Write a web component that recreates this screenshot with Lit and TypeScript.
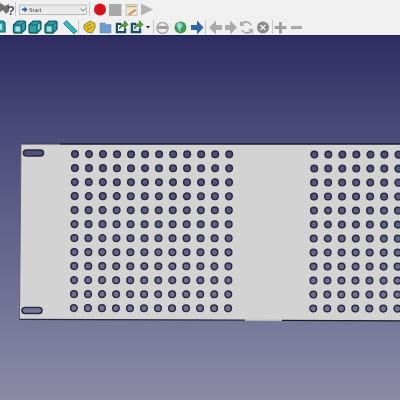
import { LitElement, html, css, svg } from "lit";
import { customElement } from "lit/decorators.js";

const cube = (x: number, win: string) => svg`<g transform="translate(${x} 20)">
<path d="M1 5 5 1.200h7l1 1V9l-4 4H2l-1-1z" fill="#2f9ea3" stroke="#125a62" stroke-width="1.300" stroke-linejoin="round"/>
<path d="${win}" fill="#a4dfe0"/>
<path d="M1.500 5H9V12.500M9 5l3.500-3.500" fill="none" stroke="#125a62" stroke-width=".9"/></g>`;

const docArrow = (x: number, fill: string) => svg`<g transform="translate(${x} 20)">
<path d="M1 3h5v2H3v6h6V8.500h2V13H1z" fill="#1d4f6a" stroke="#1d4f6a" stroke-width=".5"/>
<path d="M3 5h3l-1 3 1.500 .5L9 8.500V11H3z" fill="${fill}"/>
<path d="M4.500 9c0-3.500 2.300-5.300 5-5.300V.8L13 4.500 9.500 8V6C7.500 6 5.800 7 4.500 9z" fill="#54a83f" stroke="#2e6b27" stroke-width=".7"/></g>`;

@customElement("app-root")
export class AppRoot extends LitElement {
  static styles = css`
    :host { display: block; width: 400px; height: 400px; overflow: hidden; font-family: "Liberation Sans", sans-serif; }
    .app { width: 400px; height: 400px; display: flex; flex-direction: column; }
    .toolbar { height: 35px; background: #f0f0f0; flex: none; overflow: hidden; }
    .toolbar svg { display: block; filter: blur(0.45px); }
    .view { flex: 1; min-height: 0; background: linear-gradient(#2d2d63 0, #4d4d7c 105px, #8a8aa6 364px); border-top: 1px solid #22224e; }
    .view svg { display: block; filter: blur(0.35px); }
  `;

  render() {
    const holes: string[] = [];
    const cols: number[] = [];
    for (let i = 0; i < 12; i++) cols.push(75 + i * 14.02);
    for (let i = 0; i < 7; i++) cols.push(314.3 + i * 14.02);
    for (let r = 0; r < 12; r++) {
      const y = 154 + r * 14;
      for (const c of cols) {
        const x = c - r * 0.1;
        const ry = y + (c / 400) * 0.6 - 36;
        holes.push(`M${x - 3.3} ${ry}a3.300 3.300 0 1 0 6.600 0a3.300 3.300 0 1 0 -6.600 0z`);
      }
    }
    const slot = (x: number, y: number) => `M${x + 3} ${y}h14a3 3 0 0 1 0 6h-14a3 3 0 0 1 0 -6z`;
    const outline = "M21 108H400V284.800L19.500 283.300z";
    const cut = holes.join("") + slot(23.500, 114) + slot(22, 271.500);

    return html`<div class="app">
      <div class="toolbar">
        <svg width="400" height="35" viewBox="0 0 400 35">
          <path d="M0 3 5 6 9 4 9 11 6 14 3 10 0 12z" fill="#70706f"/>
          <text x="7" y="14.500" font-family="Liberation Sans" font-weight="bold" font-size="13" fill="#4b4e66">?</text>
          <line x1="15.500" y1="2" x2="15.500" y2="16" stroke="#c8c8c8"/>
          <rect x="19.500" y="5" width="67" height="9.500" fill="#eaeaea" stroke="#bcbcbc"/>
          <path d="M22 8.500h2.500V6.500L27.500 9.500 24.500 12.500V10.500H22z" fill="#2f5ea8"/>
          <text x="29" y="12" font-family="Liberation Serif" font-size="6.500" fill="#333">Start</text>
          <path d="M80.500 8.500l2.500 2.500 2.500-2.500" fill="none" stroke="#777"/>
          <line x1="89.500" y1="2" x2="89.500" y2="16" stroke="#c8c8c8"/>
          <circle cx="100" cy="9.500" r="6" fill="#d4141c"/>
          <rect x="109" y="4" width="12.500" height="12" fill="#a9a9a9"/>
          <rect x="126" y="4.500" width="11" height="11" fill="#ece8d8" stroke="#c4c4bc"/>
          <path d="M127 6.500h9" stroke="#c6ae60" stroke-width="1.500"/>
          <path d="M128 14l7-5 1.500 1.500-7 5z" fill="#d09550"/>
          <path d="M141 3.500 153 9.500 141 15.500z" fill="#b4b4b4"/>

          <path d="M-3 21h6l2 2v9H-3z" fill="#2f9ea3" stroke="#125a62" stroke-width="1.200"/>
          <rect x="-2" y="24" width="4" height="6" fill="#a4dfe0"/>
          ${cube(12.500, "M3 6.500h4.500v5H3z")}
          ${cube(28, "M10 4.500l1.500-1V8.500l-1.500 1.500z")}
          ${cube(44, "M3 6.500h4.500v5H3z")}
          <path d="M63.500 23.500 66.500 20.500 77 31 74 34z" fill="#35b5c2" stroke="#1b7f8a" stroke-width=".8"/>
          <line x1="78.500" y1="20" x2="78.500" y2="34" stroke="#c8c8c8"/>

          <path d="M84 25 90 21l5 2.500v4L92 33l-5-1-3-3z" fill="#e2c22b" stroke="#7d6a14" stroke-width=".8"/>
          <path d="M86 27l5-3M87 30l5-3" stroke="#8a7a1c" fill="none"/>
          <path d="M100 23h5l1 1.500h5V33h-11z" fill="#6f9bcf" stroke="#5d84b2" stroke-width=".5"/>
          ${docArrow(115, "#f8f8f8")}
          ${docArrow(130, "#cfe0f2")}
          <path d="M146 26h4l-2 2.500z" fill="#222"/>
          <line x1="153.500" y1="20" x2="153.500" y2="34" stroke="#c8c8c8"/>

          <circle cx="162.500" cy="28" r="5.500" fill="#ececec" stroke="#a8a8a8" stroke-width="1.500"/>
          <rect x="158" y="26" width="9" height="3" fill="#a0a0a0"/>
          <circle cx="180.500" cy="27.500" r="6" fill="#3e9a4a"/>
          <path d="M178 22.500l4 1 .5 3-2 2 0 4-2-3-2-4z" fill="#9cd2e4"/>
          <path d="M191 25h6v-4.500l6.500 7-6.500 7V30h-6z" fill="#2e66ad"/>
          <line x1="205.500" y1="20" x2="205.500" y2="34" stroke="#c8c8c8"/>
          <path d="M222 25h-6v-4.500l-7 7 7 7V30h6z" fill="#ababab"/>
          <path d="M225 25h5v-4.500l7 7-7 7V30h-5z" fill="#ababab"/>
          <path d="M250.500 25.500a5 5 0 0 0-7.500-1.500l1.500 2h-4.500v-5l1.500 1.500a7 7 0 0 1 10.500 2.500z M242.500 29.500a5 5 0 0 0 7.500 1.500l-1.500-2h4.500v5l-1.500-1.500a7 7 0 0 1-10.500-2.500z" fill="#ababab"/>
          <circle cx="263" cy="27.500" r="6" fill="#8a8a8a"/>
          <path d="M260.500 25l5 5m0-5-5 5" stroke="#eee" stroke-width="1.500"/>
          <line x1="272.500" y1="20" x2="272.500" y2="34" stroke="#c8c8c8"/>
          <path d="M279 22h3v4h4.500v3H282v4.500h-3V29h-4.500v-3h4.500z" fill="#a2a2a2"/>
          <rect x="291" y="26" width="11" height="3" fill="#a8a8a8"/>
        </svg>
      </div>
      <div class="view">
        <svg width="400" height="364" viewBox="0 0 400 364">
          <path d="${outline + cut}" fill="#d3d3d3" fill-rule="evenodd"/>
          <path d="${cut}" fill="none" stroke="#2a2a3e" stroke-width="1.500"/>
          <path d="M21 108H60" fill="none" stroke="#3a3a55" stroke-width="1"/>
          <path d="M60 108H400" fill="none" stroke="#1c1c2c" stroke-width="1.500"/>
          <path d="M21 108L19.500 283.300" fill="none" stroke="#55556a" stroke-width=".8"/>
          <path d="M19.500 283.300L245 284.200" fill="none" stroke="#2a2a3a" stroke-width="1.200"/>
          <path d="M245 284.200L282 284.400" fill="none" stroke="#bcbcc4" stroke-width="1.200"/>
          <path d="M282 284.400L400 284.800" fill="none" stroke="#1c1c2c" stroke-width="1.300"/>
        </svg>
      </div>
    </div>`;
  }
}
